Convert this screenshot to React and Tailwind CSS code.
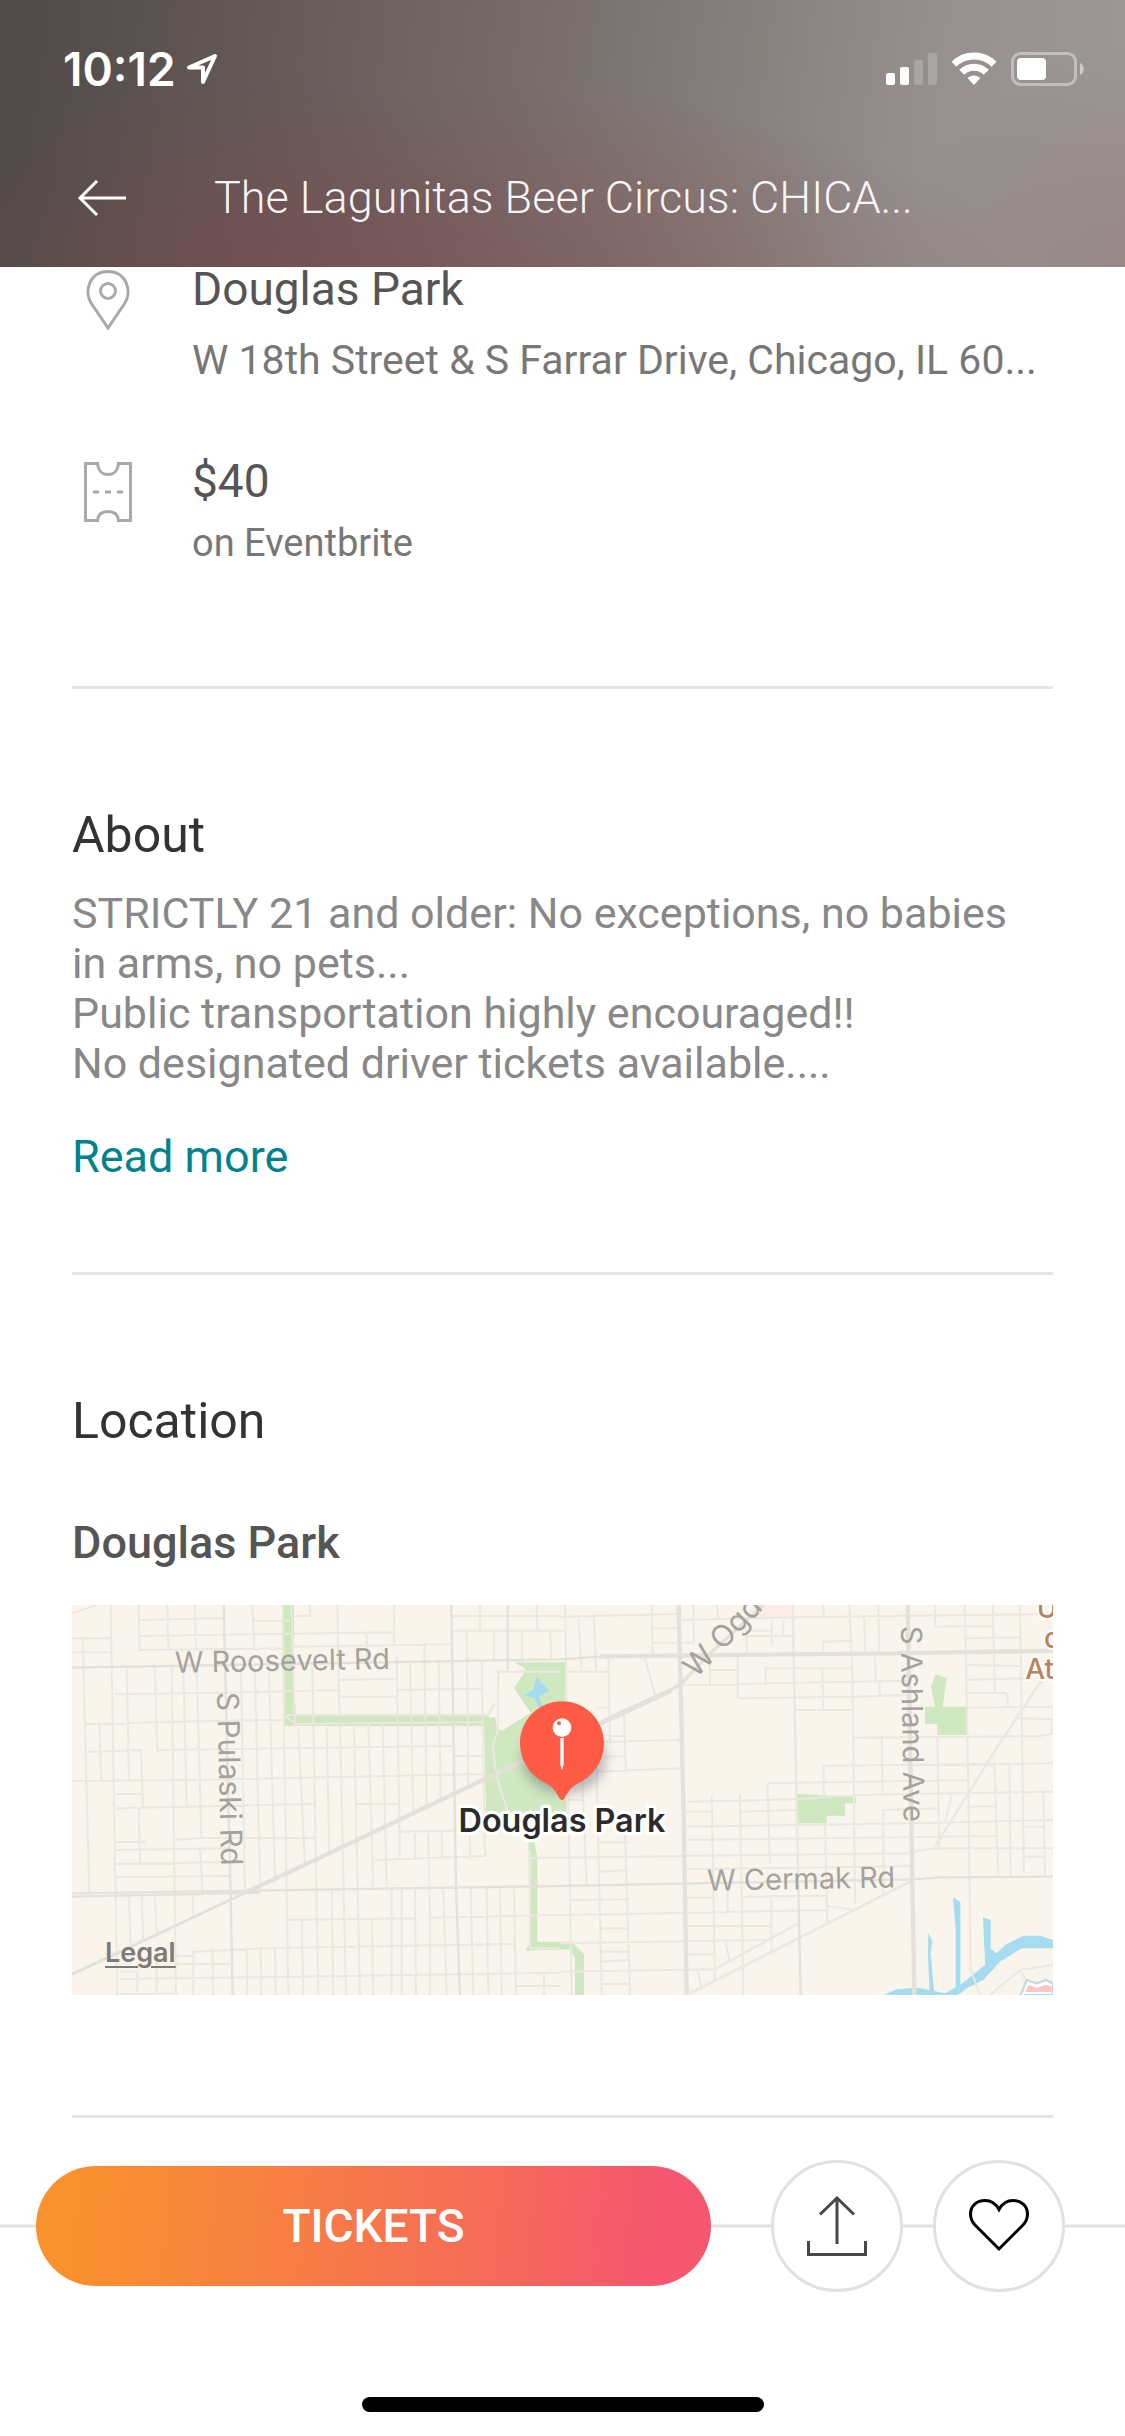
import React from 'react';

const minorWest =
  'M152 15L172 1185M236 15L238 155M322 15L325 150M404 15L408 150M577 15L583 145M668 15L672 380L685 1185M694 15L705 380M832 15L838 345M1002 15L1003 130M1260 15V95M1430 15L1432 95' +
  'M68 115L88 880M200 200L207 540M284 190L292 455M370 200L380 625M410 200L424 715M118 365L124 540M543 215L555 880M585 215L600 850M627 215L645 835M715 380L735 800M757 200L775 1185M800 380L808 770M840 380L858 1185M882 380L900 1185M925 370L940 860M968 370L980 860M1010 170L1020 780M1050 180L1060 640M1093 135L1100 620M1136 180L1142 600M1220 95L1225 560M1265 180L1275 770' +
  'M1302 95V180M1386 95V180M1470 95L1475 180M920 97L922 180M750 15V48H700' +
  'M236 625L240 790M420 740L428 880M243 450L249 625M207 890L212 1040M245 890L250 1020M284 885L290 1000M398 885L400 950M335 200L348 1185M1105 700L1110 955M1064 700L1066 780M1145 700L1147 780M1230 700V780M1065 870L1068 1185M936 955L940 1185M1025 870V1185M995 870V1185M1150 870L1160 1185M1232 865L1240 1185M1280 865L1285 1185M1320 865L1325 1185M1362 865L1368 1185M560 1040L562 1185M602 1040L604 1185M645 1040L647 1185M725 960L730 1185M815 870L820 1185M458 1045L460 1185M1110 955V1185M1452 1118V1185M232 1115V1185M290 1060V1185M400 1056V1185' +
  'M36 115H152M36 157H152M36 40L110 15M238 60L490 55M238 108L1002 97M238 150L668 145M577 62H690M700 140L1172 133M1172 92H1500M1172 48H1500M165 283L490 278L835 270M840 240L1008 236M840 290H1008M1008 270L1270 266M72 372L490 362L668 360M290 450L1175 438M72 457L243 450M36 543L410 540L1270 522M170 582H250M170 625L760 612M890 612H1015M340 720L420 714H765M165 726H257M170 750L510 745M170 792L555 785M170 832L510 828M1012 695L1180 692M945 780L1275 768M683 960L1065 955M1110 953L1500 945M398 1056L600 1045L1365 1032M345 1068H398M345 1092H520M180 1137L700 1130L1500 1118M180 1115H230M180 1182L345 1180M1185 468H1272M1368 1158H1500M680 345L1285 345L1305 310M700 372L1270 366M672 345L712 375' +
  'M1313 390L1298 440L1310 530L1345 640M1313 390L1315 215H1500M1405 773H1500M1410 750L1410 1045H1500';

const minorEast =
  'M15 15L35 1185M55 50L65 215M102 50L108 215M145 170L150 430M192 345L198 520M66 520L80 855M110 500L125 1185M195 700L210 1185M275 15L278 165M400 15L402 130M470 15L475 60M555 60L562 160M635 60V135M670 60V108M790 15L792 50M868 15L878 240L885 910M912 50L916 155M955 15L958 155M1125 15V80M1215 15L1225 560L1232 1110L1260 1185M1298 15L1305 280M1380 15L1392 820M450 170V255M533 170V295M617 205V255M787 205L790 330M945 170L947 245M958 240L960 290M455 585L465 1140M540 585L550 1185M622 550L630 790M795 670L802 970M965 415L968 580M970 630V880M790 495L792 585M1132 410L1138 750M1175 585L1155 665M1303 490L1315 825M1348 490L1352 825M1450 580L1455 825M503 860V935M633 890L635 1060M495 1020L510 1085M413 1110L425 1170M255 175L285 285M1340 280L1345 320M1475 358V400' +
  'M0 50L355 42M278 85H355M278 128H400M362 60L700 52L1480 42M0 92H12M20 215H150M110 323H150M145 408H190M130 425L360 420M130 470L198 468M110 515L360 505M15 600H72M560 92H635M560 108H700M790 155V125L878 122M1125 80L1300 78M1210 115L1380 112M450 210H533M617 205H878M370 255L1040 242M533 295L880 290L1040 285M710 330H878M880 413L1440 408L1480 400M790 497L1480 490M622 550L1225 540M380 605L710 598L890 585L1480 575M380 635H455M540 635L710 630M970 630L1138 625M380 680L1060 670L1480 660M380 720L1310 708M0 773L370 768L1060 760M1060 755L1125 745H1480M380 808L1060 798M120 727H205M120 815L205 810M30 900L205 898M0 945L205 942L800 930M380 893H465M545 890L800 887M380 978H635M0 1030L630 1020M120 985H205M120 1055H210M120 1085L210 1080M380 1063H465M0 1115L460 1108M125 1152H210M800 918L885 930M1215 195L1380 198M1215 240L1400 235M1215 280L1340 278M1220 323L1480 320M1365 355L1480 358M1220 620L1310 618M1395 680H1450M1395 770H1450' +
  'M1290 1185L1380 1110L1480 1095M1380 1110L1400 1145';

function CityMap() {
  return (
    <svg
      viewBox="36 15 2943 1170"
      preserveAspectRatio="xMidYMid slice"
      className="block h-[390px] w-full"
      role="img"
      aria-label="Map around Douglas Park"
    >
      <defs>
        <filter id="pin-shadow" x="-30%" y="-30%" width="160%" height="160%">
          <feGaussianBlur stdDeviation="18" />
        </filter>
      </defs>
      <rect x="36" y="15" width="2943" height="1170" fill="#f9f5ed" />
      <path d="M2080 15H2193V50H2062Z" fill="#fcebe8" />

      <g fill="#cfe8c0">
        <path d="M668 15H702V280L710 343H1270L1305 360L1270 378H675Z" />
        <path d="M1272 360L1305 350L1312 390H1330L1412 338L1362 265L1390 222L1396 205L1362 187H1515L1520 640H1278Z" />
        <path d="M1405 720H1422L1432 770V1025H1535L1572 1062V1185H1545V1075L1530 1048L1398 1052L1408 1030Z" />
        <path d="M2595 320H2625L2613 260L2627 222L2660 235L2648 320H2718L2722 405H2632V372H2595Z" />
        <path d="M2213 582L2386 590L2390 610H2355V647H2300V670H2213Z" />
      </g>
      <g fill="#a6dcef">
        <path d="M1430 232L1468 272L1436 290L1452 325H1440L1422 294L1390 285L1420 270Z" />
        <path d="M2465 1188L2510 1168L2575 1163L2655 1180L2700 1155L2775 1095L2835 1035L2890 1007H2940L2979 1020V1045H2885L2820 1085L2770 1140L2720 1165L2690 1188Z" />
        <path d="M2679 892L2701 905V1170H2687V990Z" />
        <path d="M2769 952L2792 960V1045L2812 1062L2776 1105Z" />
        <path d="M2605 998L2617 1025L2612 1060L2623 1180H2609L2604 1070Z" />
      </g>

      <g fill="none" stroke="#ebe8e0" strokeWidth="6">
        <path d={minorWest} />
        <path d={minorEast} transform="translate(1500 0)" />
        <path strokeWidth="8" d="M2198 15L2215 860M2945 240L2800 460L2625 740M1880 1185L2560 840M1960 1110L2215 970" />
      </g>
      <g fill="none" stroke="#e4e1da">
        <path strokeWidth="7" d="M36 203L500 195L1500 178L1630 169M491 15L512 890L518 1185M1174 15L1188 860L1200 1185M1343 15V210" />
        <path strokeWidth="7" d="M36 880L560 872L1500 858L1900 850L2560 838L2640 832L2979 830M36 890L600 878M2215 860L2222 1185M1622 374L1835 275" />
        <path strokeWidth="13" d="M1620 169L2500 160L2979 152" />
        <path strokeWidth="13" d="M1856 15L1870 600L1880 1185M2543 15L2563 1185" />
        <path strokeWidth="9" d="M36 1123L510 900L860 735" />
        <path strokeWidth="13" d="M560 876L860 735L1300 525L1400 478L1700 330" />
        <path strokeWidth="10" d="M1700 330L1860 255L1950 160L2110 15" />
      </g>

      <g fill="#a5a29e" fontFamily="Inter, 'Liberation Sans', sans-serif" fontSize="87">
        <text x="345" y="218" transform="rotate(-1 345 218)">W Roosevelt Rd</text>
        <text x="1942" y="872" transform="rotate(-1 1942 872)">W Cermak Rd</text>
        <text x="471" y="276" fontSize="90" transform="rotate(88.600 471 276)">S Pulaski Rd</text>
        <text x="2523" y="78" transform="rotate(89.200 2523 78)">S Ashland Ave</text>
        <text x="1908" y="236" fontSize="90" transform="rotate(-46 1908 236)">W Ogde</text>
      </g>
      <g
        fill="#b5855b"
        stroke="#ffffff"
        strokeWidth="12"
        strokeLinejoin="round"
        paintOrder="stroke"
        fontFamily="Inter, 'Liberation Sans', sans-serif"
        fontSize="84"
        fontWeight="500"
      >
        <text x="2930" y="55">U</text>
        <text x="2952" y="145">o</text>
        <text x="2896" y="236">At</text>
      </g>

      <g>
        <path d="M2900 1140L2930 1150L2958 1140L2979 1150V1190H2880Z" fill="#ffffff" stroke="#c5d9de" strokeWidth="7" />
        <path d="M2906 1155L2930 1164L2958 1154L2979 1162V1176H2896Z" fill="#f9c6c3" />
        <path d="M2894 1182H2979V1190H2892Z" fill="#a6dcef" />
      </g>

      <ellipse cx="1512" cy="476" rx="126" ry="106" fill="#555566" opacity="0.38" filter="url(#pin-shadow)" />
      <path
        d="M1506 304C1576 304 1632 360 1632 430C1632 484 1600 530 1552 551C1530 562 1522 580 1512 596Q1506 604 1500 596C1490 580 1482 562 1460 551C1412 530 1380 484 1380 430C1380 360 1436 304 1506 304Z"
        fill="#ff5c47"
      />
      <circle cx="1506" cy="383" r="28" fill="#ffffff" />
      <circle cx="1497" cy="370" r="6" fill="#ff5c47" />
      <path d="M1501 414H1511V494L1506 510L1501 494Z" fill="#ffffff" />
      <text
        x="1506"
        y="696"
        textAnchor="middle"
        fill="#2b2b2b"
        stroke="#ffffff"
        strokeWidth="20"
        strokeLinejoin="round"
        paintOrder="stroke"
        fontFamily="Inter, 'Liberation Sans', sans-serif"
        fontSize="97"
        fontWeight="600"
      >
        Douglas Park
      </text>
    </svg>
  );
}

function StatusBar() {
  return (
    <div className="flex h-[138px] items-center justify-between pr-[41px] pl-[63px]">
      <div className="flex items-center gap-[10px]">
        <span className="font-[Inter,sans-serif] text-[46px] leading-none font-semibold">10:12</span>
        <svg width="32" height="32" viewBox="0 0 32 32" fill="none" stroke="currentColor" strokeWidth="4" strokeLinejoin="round" aria-hidden="true">
          <path d="M29 3L3 14.500H17V29Z" />
        </svg>
      </div>
      <div className="flex items-center gap-[14px]">
        <svg width="51" height="34" viewBox="0 0 51 34" fill="currentColor" aria-label="Signal">
          <rect x="0" y="21" width="9" height="12" rx="2" />
          <rect x="14" y="15" width="9" height="18" rx="2" />
          <rect x="28" y="8" width="9" height="25" rx="2" opacity="0.2" />
          <rect x="42" y="1" width="9" height="32" rx="2" opacity="0.2" />
        </svg>
        <svg width="46" height="34" viewBox="0 0 46 34" fill="none" stroke="currentColor" strokeWidth="7" aria-label="Wi-Fi">
          <path d="M3 12.200A28.500 28.500 0 0 1 43 12.200" />
          <path d="M10.700 20.200A17.500 17.500 0 0 1 35.300 20.200" />
          <path d="M16.500 26A9.500 9.500 0 0 1 29.500 26L23 33Z" fill="currentColor" stroke="none" />
        </svg>
        <svg width="73" height="34" viewBox="0 0 73 34" fill="none" aria-label="Battery">
          <rect x="1.500" y="1.500" width="63" height="31" rx="8" stroke="currentColor" strokeWidth="3" opacity="0.4" />
          <rect x="6" y="6" width="29" height="22" rx="4" fill="currentColor" />
          <path d="M69 11C74 13 74 21 69 23Z" fill="currentColor" opacity="0.5" />
        </svg>
      </div>
    </div>
  );
}

function Divider() {
  return <hr className="h-[3px] border-0 bg-[#e5e5e5]" />;
}

export default function App() {
  return (
    <div className="min-h-screen bg-white font-[Roboto,sans-serif] text-[#555555]">
      <header className="h-[267px] bg-[radial-gradient(ellipse_46%_80%_at_45%_112%,rgba(132,72,76,0.42),rgba(132,72,76,0.26)_45%,transparent),radial-gradient(ellipse_26%_80%_at_22%_105%,rgba(124,62,72,0.3),transparent),radial-gradient(ellipse_30%_90%_at_105%_105%,rgba(140,105,108,0.4),transparent),linear-gradient(98deg,#544c4a_4%,#655b59_25%,#766c6a_46%,#87817e_66%,#969190_82%,#9d9795)] text-white">
        <StatusBar />
        <nav className="flex h-[120px] items-center gap-[88px] pr-[200px] pl-[77px]">
          <button type="button" aria-label="Back" className="shrink-0">
            <svg width="49" height="36" viewBox="0 0 49 36" fill="none" stroke="currentColor" strokeWidth="3">
              <path d="M49 18H3M20 1L3 18L20 35" />
            </svg>
          </button>
          <h1 className="truncate text-[45px] leading-[56px] font-light text-white/95">The Lagunitas Beer Circus: CHICA...</h1>
        </nav>
      </header>

      <main className="px-[72px]">
        <section className="flex gap-[48px]">
          <svg className="mt-[3px] shrink-0" width="72" height="60" viewBox="0 0 72 60" fill="none" stroke="#a9a9a9" strokeWidth="3" aria-hidden="true">
            <path d="M36 58L19 33C12 22 17 1.500 36 1.500C55 1.500 60 22 53 33Z" />
            <circle cx="36" cy="21" r="7.500" />
          </svg>
          <div className="min-w-0 flex-1">
            <h2 className="text-[46px] leading-[44px]">Douglas Park</h2>
            <p className="mt-[22px] text-[41px] leading-[54px] whitespace-nowrap text-[#777777]">W 18th Street &amp; S Farrar Drive, Chicago, IL 60...</p>
          </div>
        </section>
        <section className="mt-[72px] flex gap-[48px]">
          <svg className="mt-[3px] shrink-0" width="72" height="60" viewBox="0 0 72 60" fill="none" stroke="#a9a9a9" strokeWidth="3" aria-hidden="true">
            <path d="M13.500 1.500H25.500C26 8 30 12.500 36 12.500S46 8 46.500 1.500H58.500V58.500H46.500C46 52 42 49.500 36 49.500S26 52 25.500 58.500H13.500Z" />
            <path d="M21 30H51" strokeDasharray="6 6" />
          </svg>
          <div className="min-w-0 flex-1">
            <p className="text-[46px] leading-[44px]">$40</p>
            <p className="mt-[16px] text-[38px] leading-[48px] text-[#777777]">on Eventbrite</p>
          </div>
        </section>

        <div className="mt-[119px]"><Divider /></div>

        <section>
          <h2 className="mt-[118px] text-[50px] leading-[56px] text-[#333333]">About</h2>
          <p className="mt-[25px] pr-[36px] text-[43px] leading-[50px] text-[#888888]">
            STRICTLY 21 and older: No exceptions, no babies in arms, no pets...
            <br />
            Public transportation highly encouraged!!
            <br />
            No designated driver tickets available....
          </p>
          <button type="button" className="mt-[44px] block text-[45px] leading-[50px] text-[#00838d]">Read more</button>
        </section>

        <div className="mt-[90px]"><Divider /></div>

        <section>
          <h2 className="mt-[118px] text-[50px] leading-[56px] text-[#333333]">Location</h2>
          <h3 className="mt-[69px] text-[45px] leading-[50px] font-medium">Douglas Park</h3>
          <div className="relative mt-[37px]">
            <CityMap />
            <a href="#legal" className="absolute bottom-[26px] left-[33px] font-[Inter,sans-serif] text-[27px] leading-[32px] font-semibold text-[#7d7b78] underline decoration-2 underline-offset-4">Legal</a>
          </div>
        </section>

        <div className="mt-[120px]"><Divider /></div>
      </main>

      <footer className="pt-[42px] pb-[24px]">
        <div className="relative flex items-center pr-[60px] pl-[36px]">
          <div className="absolute inset-x-0 top-1/2 h-[3px] -translate-y-1/2 bg-[#e1e1e1]" />
          <button type="button" className="relative h-[120px] flex-1 rounded-full bg-linear-[95deg,#f9922c_4%,#f77d45_40%,#f66a59_68%,#f55670_92%] text-[46px] leading-none font-medium text-white">
            TICKETS
          </button>
          <button type="button" aria-label="Share" className="relative ml-[60px] flex size-[132px] items-center justify-center rounded-full border-3 border-[#e1e1e1] bg-white text-[#46484a]">
            <svg width="60" height="60" viewBox="0 0 60 60" fill="none" stroke="currentColor" strokeWidth="3" aria-hidden="true">
              <path d="M1.500 45V58.500H58.500V45M30 48V2M13 18.500L30 2L47 18.500" />
            </svg>
          </button>
          <button type="button" aria-label="Like" className="relative ml-[30px] flex size-[132px] items-center justify-center rounded-full border-3 border-[#e1e1e1] bg-white text-black">
            <svg width="60" height="60" viewBox="0 0 60 60" fill="none" stroke="currentColor" strokeWidth="3" aria-hidden="true">
              <path d="M30 53L6.500 29.500C3 26 1.500 22 1.500 18C1.500 9.500 8 4.500 16 4.500C23 4.500 27 8 30 13.500C33 8 37 4.500 44 4.500C52 4.500 58.500 9.500 58.500 18C58.500 22 57 26 53.500 29.500Z" />
            </svg>
          </button>
        </div>
        <div className="mx-auto mt-[105px] h-[15px] w-[402px] rounded-full bg-black" />
      </footer>
    </div>
  );
}
